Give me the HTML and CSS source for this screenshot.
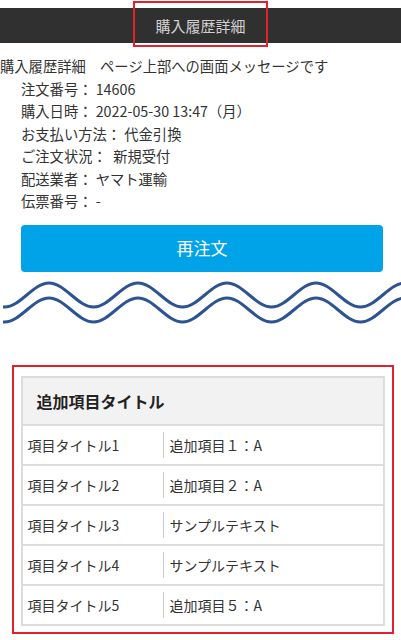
FILE: index.html
```html
<!DOCTYPE html>
<html lang="ja">
<head>
<meta charset="utf-8">
<title>購入履歴詳細</title>
<link rel="stylesheet" href="styles.css">
</head>
<body>
<header class="topbar">
  <h1 class="topbar-title">購入履歴詳細</h1>
</header>

<section class="summary">
  <p class="summary-line summary-lead">購入履歴詳細　ページ上部への画面メッセージです</p>
  <p class="summary-line">注文番号： 14606</p>
  <p class="summary-line">購入日時： 2022-05-30 13:47（月）</p>
  <p class="summary-line">お支払い方法： 代金引換</p>
  <p class="summary-line">ご注文状況：&nbsp; 新規受付</p>
  <p class="summary-line">配送業者： ヤマト運輸</p>
  <p class="summary-line">伝票番号： -</p>
</section>

<div class="actions">
  <button class="reorder-btn" type="button">再注文</button>
</div>

<svg class="wave" width="401" height="50" viewBox="0 0 401 50" aria-hidden="true">
  <path d="M3 29 L4.5 29 C20.5 29 33 5 49 5 S77.5 29 93.5 29 S122 5 138 5 S166.5 29 182.5 29 S211 5 227 5 S255.5 29 271.5 29 S300 5 316 5 S344.5 29 360.5 29 S389 5 405 5" fill="none" stroke="#2d5392" stroke-width="3"/>
  <path d="M3 44 L4.5 44 C20.5 44 33 20 49 20 S77.5 44 93.5 44 S122 20 138 20 S166.5 44 182.5 44 S211 20 227 20 S255.5 44 271.5 44 S300 20 316 20 S344.5 44 360.5 44 S389 20 405 20" fill="none" stroke="#2d5392" stroke-width="3"/>
</svg>

<section class="extra-wrap">
  <div class="extra-table">
    <div class="extra-head">追加項目タイトル</div>
    <div class="extra-row"><div class="extra-label">項目タイトル1</div><div class="extra-value">追加項目１：A</div></div>
    <div class="extra-row"><div class="extra-label">項目タイトル2</div><div class="extra-value">追加項目２：A</div></div>
    <div class="extra-row"><div class="extra-label">項目タイトル3</div><div class="extra-value">サンプルテキスト</div></div>
    <div class="extra-row"><div class="extra-label">項目タイトル4</div><div class="extra-value">サンプルテキスト</div></div>
    <div class="extra-row"><div class="extra-label">項目タイトル5</div><div class="extra-value">追加項目５：A</div></div>
  </div>
</section>
</body>
</html>
```

FILE: styles.css
```css
* { box-sizing: border-box; }

html, body {
  margin: 0;
  padding: 0;
  background: #ffffff;
}

body {
  font-family: "Noto Sans CJK JP", "Noto Sans", sans-serif;
  font-size: 14px;
  color: #333333;
  width: 401px;
}

.topbar {
  margin-top: 8px;
  height: 35px;
  background: #303030;
  display: flex;
  align-items: center;
  justify-content: center;
}

.topbar-title {
  position: relative;
  margin: 0;
  font-size: 15px;
  font-weight: normal;
  line-height: 20px;
  color: #d0d0d0;
}

.topbar-title::after {
  content: "";
  position: absolute;
  left: -22px;
  right: -22px;
  top: -15px;
  bottom: -11px;
  border: 2.5px solid #e3202b;
}

.summary {
  margin-top: 12px;
}

.summary-line {
  margin: 0;
  padding-left: 21px;
  font-size: 14.3px;
  line-height: 22.5px;
  white-space: nowrap;
}

.summary-line.summary-lead {
  padding-left: 0;
}

.actions {
  margin-top: 12px;
  padding: 0 18px 0 21px;
}

.reorder-btn {
  display: block;
  width: 100%;
  height: 47px;
  border: none;
  border-radius: 4px;
  background: #00a3e8;
  color: #ffffff;
  font-family: inherit;
  font-size: 17px;
  padding: 0 0 2px;
}

.wave {
  display: block;
  margin-top: 6px;
}

.extra-wrap {
  margin: 37px 7px 0 12px;
  border: 2.5px solid #e3202b;
  padding: 9px 7px 6px 6.5px;
}

.extra-table {
  border: 2px solid #dcdcdc;
}

.extra-head {
  height: 46px;
  background: #f2f2f2;
  display: flex;
  align-items: center;
  padding-left: 14px;
  font-size: 16px;
  font-weight: bold;
  color: #222222;
}

.extra-row {
  display: flex;
  align-items: center;
  height: 40px;
  border-top: 2px solid #dcdcdc;
}

.extra-label {
  width: 140px;
  padding-left: 5px;
  white-space: nowrap;
}

.extra-value {
  border-left: 1px solid #cccccc;
  padding-left: 6px;
  line-height: 26px;
  white-space: nowrap;
}
```
